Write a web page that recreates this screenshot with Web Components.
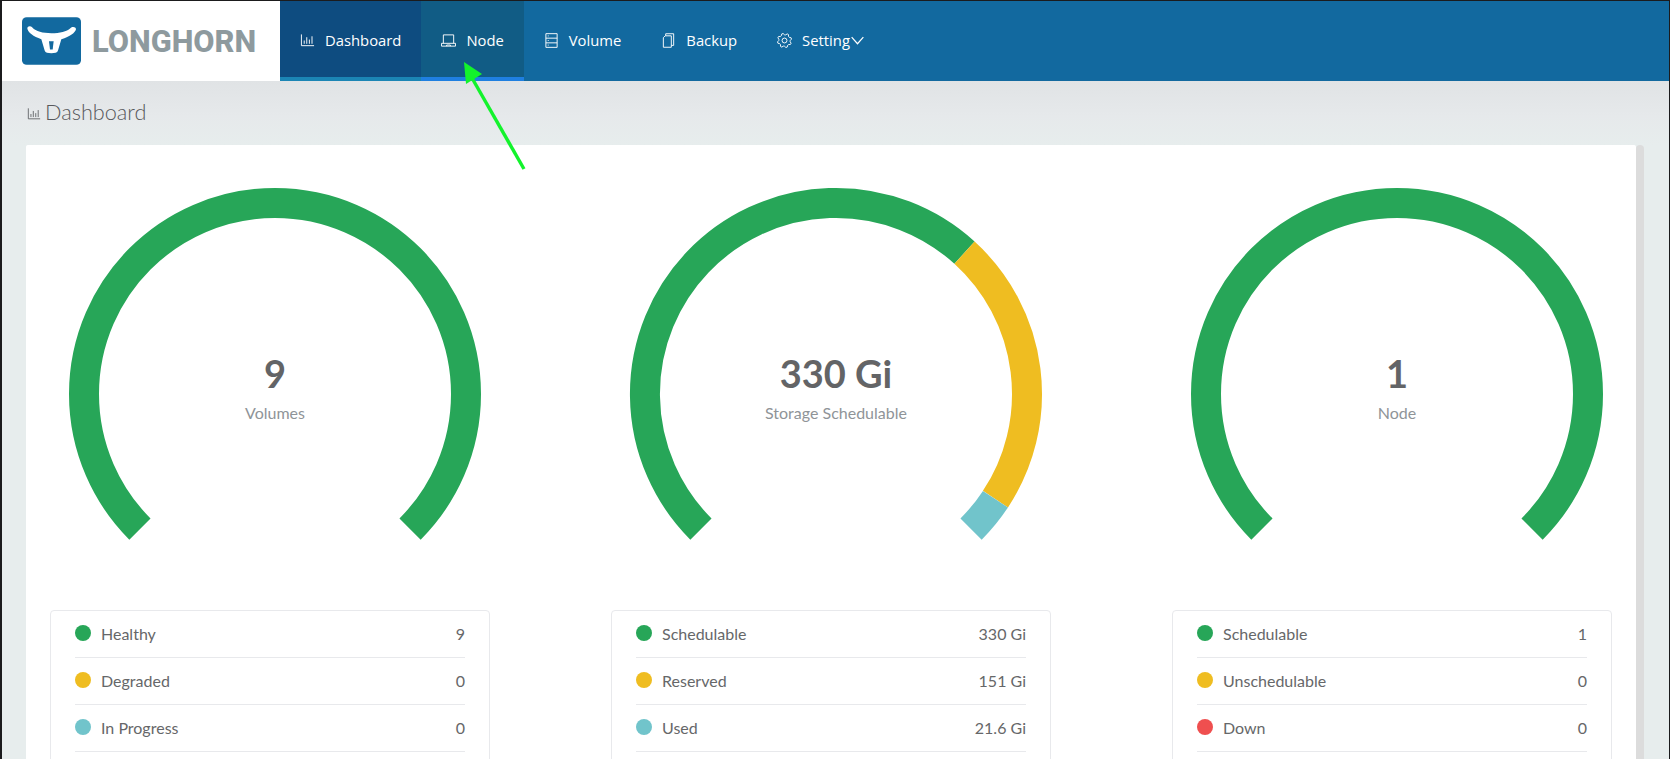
<!DOCTYPE html>
<html>
<head>
<meta charset="utf-8">
<title>Longhorn</title>
<style>
    html, body { margin: 0; height: 100%; overflow: hidden; background: #1b1b1d; }
</style>
</head>
<body>
<lh-app>
    <lh-header slot="header">
        <lh-nav-item icon="chart" state="current">Dashboard</lh-nav-item>
        <lh-nav-item icon="laptop" state="hover">Node</lh-nav-item>
        <lh-nav-item icon="database">Volume</lh-nav-item>
        <lh-nav-item icon="copy">Backup</lh-nav-item>
        <lh-nav-item icon="gear" caret>Setting</lh-nav-item>
    </lh-header>
    <lh-page-title>Dashboard</lh-page-title>
    <lh-panel>
        <lh-stat>
            <lh-gauge segments="1:#27a658" value="9" label="Volumes"></lh-gauge>
            <lh-legend>
                <lh-legend-row color="#27a658" value="9">Healthy</lh-legend-row>
                <lh-legend-row color="#efbd21" value="0">Degraded</lh-legend-row>
                <lh-legend-row color="#71c4cb" value="0">In Progress</lh-legend-row>
            </lh-legend>
        </lh-stat>
        <lh-stat>
            <lh-gauge segments="330:#27a658,151:#efbd21,21.6:#71c4cb" value="330 Gi" label="Storage Schedulable"></lh-gauge>
            <lh-legend>
                <lh-legend-row color="#27a658" value="330 Gi">Schedulable</lh-legend-row>
                <lh-legend-row color="#efbd21" value="151 Gi">Reserved</lh-legend-row>
                <lh-legend-row color="#71c4cb" value="21.6 Gi">Used</lh-legend-row>
            </lh-legend>
        </lh-stat>
        <lh-stat>
            <lh-gauge segments="1:#27a658" value="1" label="Node"></lh-gauge>
            <lh-legend>
                <lh-legend-row color="#27a658" value="1">Schedulable</lh-legend-row>
                <lh-legend-row color="#efbd21" value="0">Unschedulable</lh-legend-row>
                <lh-legend-row color="#ef4f4f" value="0">Down</lh-legend-row>
            </lh-legend>
        </lh-stat>
    </lh-panel>
    <lh-arrow slot="overlay"></lh-arrow>
</lh-app>

<script>
// Line icons, all on a 16x16 box
function gearPath() {
    let d = '';
    const teeth = 8;
    for (let i = 0; i < teeth * 4; i++) {
        const a = (i / (teeth * 4)) * Math.PI * 2 + Math.PI / 8;
        const r = (i % 4 === 0 || i % 4 === 1) ? 7.6 : 6.1;
        d += (i ? 'L' : 'M') + (8 + r * Math.cos(a)).toFixed(2) + ' ' + (8 + r * Math.sin(a)).toFixed(2);
    }
    return d + 'Z';
}

const ICONS = {
    chart: '<path d="M1.5 1.5v12H15"/><path d="M4.5 11.5V8M7.2 11.5V4.5M10 11.5V7M12.8 11.5V3.5"/>',
    laptop: '<path d="M2.5 11V2h11V11"/><path d="M.5 11h15v3H.5z"/><path d="M6 14v-1.2h4V14"/>',
    database: '<path d="M2 .7h12v14.6H2z"/><path d="M2 5.5h12M2 10.5h12"/><path d="M4 3.1h1M4 8h1M4 12.9h1"/>',
    copy: '<path d="M5 3V.8h8.5v12.4H11"/><path d="M2.5 5L4.5 3H11v12.2H2.5z"/>',
    gear: `<path stroke-linejoin="round" d="${gearPath()}"/><circle cx="8" cy="8" r="2.6"/>`
};

// Outer frame: header, then the page below it, overlays on top
class LhApp extends HTMLElement {
    constructor() {
        super();
        this.attachShadow({ mode: 'open' });
        this.shadowRoot.innerHTML = `
            <style>
                :host {
                    display: flex;
                    flex-direction: column;
                    position: relative;
                    height: 758px;
                    padding: 1px 1px 0 2px;
                    overflow: hidden;
                    font-family: Lato, "Liberation Sans", sans-serif;
                }
                main {
                    flex: 1;
                    min-height: 0;
                    padding: 0 25px 0 24px;
                    background: linear-gradient(#e0e3e5 0, #e6e9eb 35px, #e7eded 64px);
                }
            </style>
            <slot name="header"></slot>
            <main><slot></slot></main>
            <slot name="overlay"></slot>
        `;
    }
}

class LhHeader extends HTMLElement {
    constructor() {
        super();
        this.attachShadow({ mode: 'open' });
        this.shadowRoot.innerHTML = `
            <style>
                :host {
                    display: flex;
                    height: 80px;
                    flex: none;
                    background: #12699f;
                }
                .brand {
                    width: 278px;
                    box-sizing: border-box;
                    padding-left: 20px;
                    display: flex;
                    align-items: center;
                    gap: 11px;
                    background: #fff;
                }
                .brand svg { width: 59px; height: 48px; display: block; }
                .name {
                    font: 800 30.8px Roboto, "Liberation Sans", sans-serif;
                    color: #8e9a9e;
                }
                nav { display: flex; }
            </style>
            <div class="brand">
                <svg viewBox="0 0 177 143">
                    <rect width="177" height="143" rx="14" fill="#12699f"/>
                    <path fill="#fff" d="M16 34C16 26 26 25 31 31C42 43 62 48 88 48C114 48 134 43 145 33C150 27 162 28 162 36C160 46 144 58 118 66L108 100C106 107 98 108 88 108C78 108 70 107 68 100L58 66C34 58 18 46 16 34Z"/>
                    <path fill="#12699f" d="M81 72h14l-3 25h-8z"/>
                </svg>
                <span class="name">LONGHORN</span>
            </div>
            <nav><slot></slot></nav>
        `;
    }
}

class LhNavItem extends HTMLElement {
    constructor() {
        super();
        this.attachShadow({ mode: 'open' });
        const caret = this.hasAttribute('caret')
            ? '<svg class="caret" viewBox="0 0 14 9"><path d="M.7 .8L7 8l6.3-7.2"/></svg>' : '';
        this.shadowRoot.innerHTML = `
            <style>
                :host {
                    display: flex;
                    align-items: center;
                    box-sizing: border-box;
                    height: 80px;
                    padding: 0 20px 2px;
                    color: #fff;
                    font: 14.8px "Open Sans", sans-serif;
                }
                :host([state="current"]) {
                    background: #0e4c80;
                    box-shadow: inset 0 -4px 0 #1b85b4;
                }
                :host([state="hover"]) {
                    background: #115c85;
                    box-shadow: inset 0 -4px 0 #1f7fe0;
                }
                .icon {
                    width: 15px;
                    height: 15px;
                    margin-right: 10px;
                    fill: none;
                    stroke: currentColor;
                    stroke-width: 1;
                    flex: none;
                }
                .caret {
                    width: 13px;
                    height: 9px;
                    margin-left: 1px;
                    fill: none;
                    stroke: currentColor;
                    stroke-width: 1.3;
                }
            </style>
            <svg class="icon" viewBox="0 0 16 16">${ICONS[this.getAttribute('icon')]}</svg>
            <slot></slot>${caret}
        `;
    }
}

class LhPageTitle extends HTMLElement {
    constructor() {
        super();
        this.attachShadow({ mode: 'open' });
        this.shadowRoot.innerHTML = `
            <style>
                :host {
                    display: flex;
                    align-items: center;
                    gap: 4px;
                    height: 64px;
                    box-sizing: border-box;
                    padding-bottom: 3px;
                    color: #58595c;
                    font: 300 21.7px Lato, sans-serif;
                }
                svg {
                    width: 14px;
                    height: 14px;
                    margin-left: 1px;
                    margin-top: 5px;
                    fill: none;
                    stroke: #5e6063;
                    stroke-width: 1;
                }
            </style>
            <svg viewBox="0 0 16 16">${ICONS.chart}</svg>
            <slot></slot>
        `;
    }
}

// White panel, three columns, with its scroll thumb beside it
class LhPanel extends HTMLElement {
    constructor() {
        super();
        this.attachShadow({ mode: 'open' });
        this.shadowRoot.innerHTML = `
            <style>
                :host { display: flex; height: 640px; }
                .body {
                    width: 1610px;
                    height: 800px;
                    box-sizing: border-box;
                    padding: 20px 24px 0;
                    background: #fff;
                    border-radius: 2px 2px 0 0;
                    display: grid;
                    grid-template-columns: repeat(3, 440px);
                    column-gap: 121px;
                    align-content: start;
                }
                .thumb {
                    width: 8px;
                    height: 800px;
                    background: #dcdcdc;
                    border-radius: 4px 4px 0 0;
                }
            </style>
            <div class="body"><slot></slot></div>
            <div class="thumb"></div>
        `;
    }
}

class LhStat extends HTMLElement {
    constructor() {
        super();
        this.attachShadow({ mode: 'open' });
        this.shadowRoot.innerHTML = `
            <style>
                :host { display: flex; flex-direction: column; gap: 25px; min-width: 0; }
            </style>
            <slot></slot>
        `;
    }
}

// 270 degree gauge, segments are "amount:colour" pairs
class LhGauge extends HTMLElement {
    constructor() {
        super();
        this.attachShadow({ mode: 'open' });
        const segs = this.getAttribute('segments').split(',').map(s => s.split(':'));
        const total = segs.reduce((sum, s) => sum + Number(s[0]), 0);
        const cx = 225, cy = 229, r = 191;
        const point = frac => {
            const a = (225 - frac * 270) * Math.PI / 180;
            return `${(cx + r * Math.cos(a)).toFixed(2)} ${(cy - r * Math.sin(a)).toFixed(2)}`;
        };
        let done = 0;
        const arcs = segs.map(([amount, color]) => {
            const from = done / total;
            done += Number(amount);
            const to = done / total;
            const large = (to - from) * 270 > 180 ? 1 : 0;
            return `<path d="M${point(from)}A${r} ${r} 0 ${large} 1 ${point(to)}" stroke="${color}"/>`;
        }).join('');
        this.shadowRoot.innerHTML = `
            <style>
                :host {
                    display: grid;
                    width: 450px;
                    height: 420px;
                    margin-right: -10px;
                }
                svg, .caption { grid-area: 1 / 1; }
                svg { width: 450px; height: 420px; fill: none; stroke-width: 30; }
                .caption {
                    height: 90px;
                    margin-top: 184px;
                    text-align: center;
                }
                .value {
                    font: bold 38px/48px Lato, sans-serif;
                    color: #636466;
                }
                .label {
                    font: 16px/24px Lato, sans-serif;
                    color: #8f9498;
                    margin-top: 4px;
                }
            </style>
            <svg viewBox="0 0 450 420">${arcs}</svg>
            <div class="caption">
                <div class="value">${this.getAttribute('value')}</div>
                <div class="label">${this.getAttribute('label')}</div>
            </div>
        `;
    }
}

class LhLegend extends HTMLElement {
    constructor() {
        super();
        this.attachShadow({ mode: 'open' });
        this.shadowRoot.innerHTML = `
            <style>
                :host {
                    display: block;
                    height: 300px;
                    box-sizing: border-box;
                    padding: 0 24px;
                    border: 1px solid #e8e9ec;
                    border-radius: 4px;
                }
            </style>
            <slot></slot>
        `;
    }
}

class LhLegendRow extends HTMLElement {
    constructor() {
        super();
        this.attachShadow({ mode: 'open' });
        this.shadowRoot.innerHTML = `
            <style>
                :host {
                    display: flex;
                    align-items: center;
                    height: 47px;
                    box-sizing: border-box;
                    padding-bottom: 2px;
                    border-bottom: 1px solid #e8e9ec;
                    color: #666769;
                    font: 16px Lato, sans-serif;
                }
                .dot {
                    width: 16px;
                    height: 16px;
                    border-radius: 50%;
                    margin-right: 10px;
                    background: ${this.getAttribute('color')};
                }
                .value { margin-left: auto; }
            </style>
            <span class="dot"></span>
            <slot></slot>
            <span class="value">${this.getAttribute('value')}</span>
        `;
    }
}

// Annotation arrow drawn over the screenshot
class LhArrow extends HTMLElement {
    constructor() {
        super();
        this.attachShadow({ mode: 'open' });
        this.shadowRoot.innerHTML = `
            <style>
                :host { position: absolute; left: 0; top: 0; pointer-events: none; }
                svg { display: block; width: 1670px; height: 759px; }
            </style>
            <svg viewBox="0 0 1670 759">
                <path d="M524 169L472 78" stroke="#13f32c" stroke-width="3.4" fill="none"/>
                <path d="M464 62L482 74L466 84Z" fill="#13f32c"/>
            </svg>
        `;
    }
}

customElements.define('lh-app', LhApp);
customElements.define('lh-header', LhHeader);
customElements.define('lh-nav-item', LhNavItem);
customElements.define('lh-page-title', LhPageTitle);
customElements.define('lh-panel', LhPanel);
customElements.define('lh-stat', LhStat);
customElements.define('lh-gauge', LhGauge);
customElements.define('lh-legend', LhLegend);
customElements.define('lh-legend-row', LhLegendRow);
customElements.define('lh-arrow', LhArrow);
</script>
</body>
</html>
